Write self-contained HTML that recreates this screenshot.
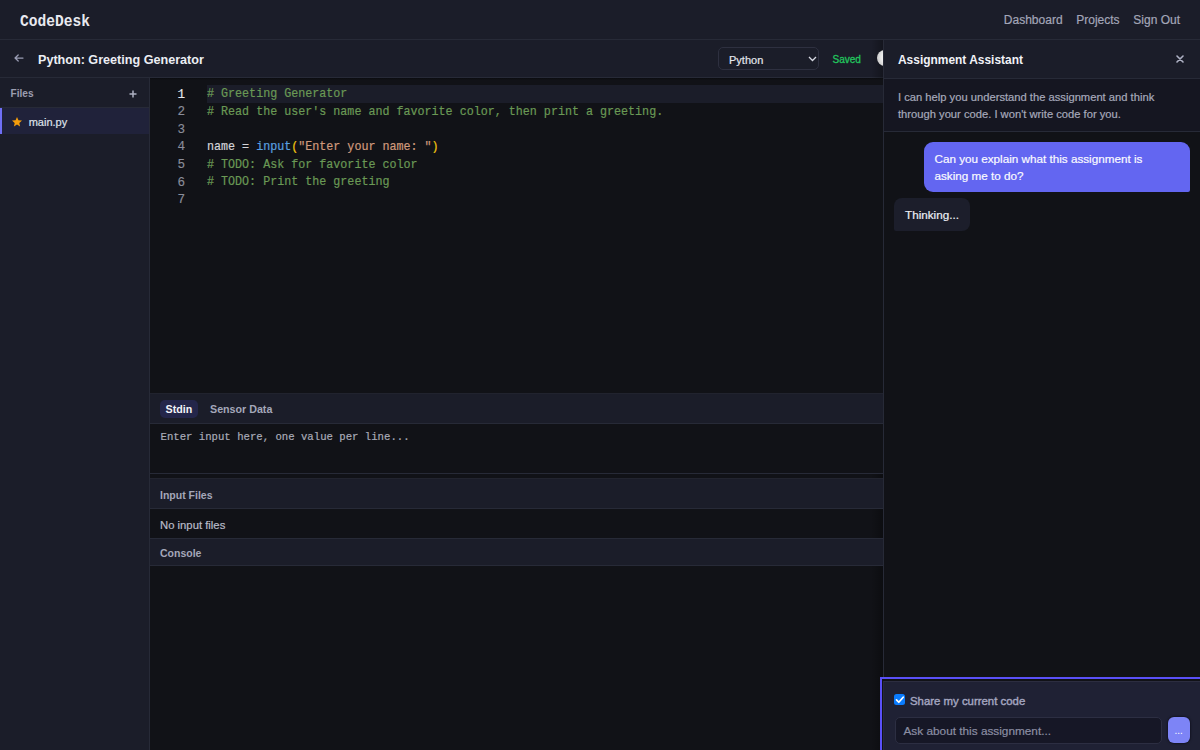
<!DOCTYPE html>
<html><head><meta charset="utf-8">
<style>
*{box-sizing:border-box;margin:0;padding:0}
html,body{width:1200px;height:750px;overflow:hidden;background:#111217;font-family:"Liberation Sans",sans-serif}
.sw{-webkit-text-stroke:0.2px currentColor}
.abs{position:absolute}
#top{left:0;top:0;width:1200px;height:40px;background:#1b1d29;border-bottom:1px solid #272a37}
#logo{left:20px;top:11.5px;font-family:"Liberation Mono",monospace;font-weight:bold;font-size:16px;color:#e8e9f0;line-height:20px;transform:scaleX(0.91);transform-origin:0 0}
#nav{right:20px;top:12px;font-size:12px;color:#a3a6b8;line-height:16px;white-space:nowrap}
#nav span{margin-left:13.7px}
#bar{left:0;top:40px;width:1200px;height:38px;background:#1b1d29;border-bottom:1px solid #272a37}
#back{left:13px;top:50px;color:#9a9db0;font-size:12px}
#title{left:38px;top:52px;font-weight:bold;font-size:12.6px;color:#eceef4;line-height:16px}
#sel{left:718px;top:47px;width:101px;height:23px;border:1px solid #2e3040;border-radius:5px;background:#1b1d29}
#sel span{position:absolute;left:10px;top:5px;font-size:11px;color:#e4e6ee;line-height:14px}
#saved{left:832.5px;top:53px;font-size:10px;color:#22c55e;line-height:14px;-webkit-text-stroke:0.3px #22c55e}
#knob{left:877px;top:50px;width:16px;height:16px;border-radius:50%;background:radial-gradient(circle at 70% 45%,#fafafa 0,#ededed 45%,#c9c9c9 80%,#8a8a8a 100%)}
#side{left:0;top:78px;width:150px;height:672px;background:#1b1d29;border-right:1px solid #272a37}
#fh{left:0;top:78px;width:149px;height:30px;border-bottom:1px solid #272a37}
#fh b{position:absolute;left:10.5px;top:9px;font-size:10.1px;color:#9b9eb0;line-height:13px}
#plus{left:128.5px;top:86.5px;font-size:13px;color:#a6a9bb;line-height:14px}
#row{left:0;top:108px;width:149px;height:26px;background:#20223a;border-left:2px solid #6f6ff5}
#star{left:11px;top:116px;width:12px;height:12px}
#mainpy{left:28.7px;top:116px;font-size:11px;color:#dfe1ea;line-height:13px}
#ed{left:150px;top:78px;width:733px;height:315px;background:#111217}
.ln{position:absolute;left:150px;width:35px;text-align:right;font-family:"Liberation Mono",monospace;font-size:12.6px;color:#8a8d9a;line-height:17.6px;margin-top:1.8px;-webkit-text-stroke:0.15px currentColor}
.cl{position:absolute;left:207px;margin-top:1.5px;font-family:"Liberation Mono",monospace;font-size:12.6px;color:#6a9955;line-height:17.6px;white-space:pre;-webkit-text-stroke:0.2px currentColor;transform:scaleX(0.9286);transform-origin:0 0}
#hl{left:207px;top:85px;width:676px;height:17.6px;background:#1b1d29}
#tabs{left:150px;top:393px;width:733px;height:31px;background:#1b1d29;border-bottom:1px solid #272a37;border-top:1px solid #21232e}
#stdin{left:160px;top:400px;width:38px;height:18px;border-radius:5px;background:#24264a}
#stdin b{position:absolute;left:5.5px;top:2px;font-size:10.7px;color:#f2f3f8;line-height:14px}
#sensor{left:210px;top:402px;font-size:10.7px;font-weight:bold;color:#a4a7b9;line-height:14px}
#stdinbox{left:150px;top:424px;width:733px;height:50px;background:#111217;border-bottom:1px solid #272a37}
#ph{left:160.5px;top:430px;font-family:"Liberation Mono",monospace;font-size:10.65px;color:#a9abb8;-webkit-text-stroke:0.2px #a9abb8;line-height:14px;white-space:pre}
#ifh{left:150px;top:478px;width:733px;height:31px;background:#1b1d29;border-bottom:1px solid #272a37;border-top:1px solid #22242f}
#ifh b,#ch b{position:absolute;left:10px;font-size:10.5px;color:#a4a7b9;line-height:14px}
#ifh b{top:9px}
#noin{left:160px;top:518px;font-size:11.3px;color:#b8bac8;line-height:14px}
#ch{left:150px;top:538px;width:733px;height:28px;background:#1b1d29;border-bottom:1px solid #272a37;border-top:1px solid #272a37}
#ch b{top:7px}
#panel{left:883px;top:40px;width:317px;height:710px;background:#111217;border-left:1px solid #272a37}
#ph1{left:884px;top:40px;width:316px;height:39px;background:#1b1d29;border-bottom:1px solid #272a37}
#ph1 b{position:absolute;left:14px;top:13px;font-size:11.95px;color:#f1f2f7;line-height:14px}
#close{left:1176px;top:52.5px;font-size:12px;color:#c8cad6;line-height:14px;-webkit-text-stroke:0.4px #c8cad6}
#intro{left:884px;top:79px;width:316px;height:53px;background:#151621;border-bottom:1px solid #272a37}
#intro p{position:absolute;left:14px;top:10px;font-size:11.2px;color:#a6a9bb;line-height:16.7px;width:275px}
#ub{left:924px;top:142px;width:266px;height:50px;background:#6366f1;border-radius:9px 9px 2px 9px}
#ub p{position:absolute;left:10.5px;top:9px;font-size:11.7px;color:#fafaff;line-height:16.8px;width:225px}
#tb{left:894px;top:198px;width:76px;height:33px;background:#1c1e2b;border-radius:8px 8px 8px 2px}
#tb p{position:absolute;left:11px;top:10px;font-size:11.7px;color:#eceef4;line-height:14px}
#comp{left:880px;top:677px;width:322px;height:76px;background:#111217;border:2px solid #5a50f8}
#comp2{left:883px;top:681px;width:317px;height:69px;background:#1f2134;border-top:1px solid #2c2d40;border-left:1px solid #272a37}
#cb{left:894px;top:694px;width:11px;height:11px;background:#0a7cff;border-radius:2.5px}
#share{left:910px;top:694px;font-size:11.4px;color:#a4a6c0;line-height:14px;-webkit-text-stroke:0.4px #a4a6c0}
#inp{left:894.5px;top:717px;width:267.5px;height:26.5px;background:#161726;border:1px solid #2c2e42;border-radius:5px}
#inp span{position:absolute;left:8px;top:6px;font-size:11.8px;color:#8b8ea3;line-height:14px}
#send{left:1168px;top:717px;width:22px;height:26px;background:#7d84f6;border-radius:6px;box-shadow:0 0 1.5px 1px rgba(10,10,20,.5)}
#send span{position:absolute;left:6.5px;top:9px;font-size:10px;color:#fff;line-height:10px}
</style></head><body>
<div id="top" class="abs"></div>
<div id="logo" class="abs">CodeDesk</div>
<div id="nav" class="abs sw"><span>Dashboard</span><span>Projects</span><span>Sign Out</span></div>
<div id="bar" class="abs"></div>
<svg class="abs" style="left:13.5px;top:53.5px" width="10" height="8" viewBox="0 0 10 8"><path d="M1 4H9M4.2 1L1 4L4.2 7" fill="none" stroke="#9a9db4" stroke-width="1.25" stroke-linecap="round" stroke-linejoin="round"/></svg>
<div id="title" class="abs">Python: Greeting Generator</div>
<div id="sel" class="abs"><span class="sw">Python</span>
<svg style="position:absolute;left:89px;top:8px" width="9" height="6" viewBox="0 0 9 6"><path d="M1 1L4.5 4.5L8 1" fill="none" stroke="#d8dae4" stroke-width="1.3"/></svg></div>
<div id="saved" class="abs">Saved</div>
<div class="abs" style="left:871px;top:40px;width:12px;height:710px;background:linear-gradient(90deg,rgba(0,0,0,0),rgba(0,0,0,.28))"></div>
<div id="knob" class="abs"></div>

<div id="side" class="abs"></div>
<div id="fh" class="abs"><b>Files</b></div>
<svg class="abs" style="left:128.5px;top:90px" width="8" height="8" viewBox="0 0 8 8"><path d="M4 0.5V7.5M0.5 4H7.5" stroke="#aeb1c2" stroke-width="1.5"/></svg>
<div id="row" class="abs"></div>
<svg id="star" class="abs" viewBox="0 0 24 24"><path d="M12 2l2.9 6.6 7.1.6-5.4 4.7 1.6 7-6.2-3.7-6.2 3.7 1.6-7L2 9.2l7.1-.6z" fill="#f59e0b"/></svg>
<div id="mainpy" class="abs sw">main.py</div>

<div id="ed" class="abs"></div>
<div class="abs" style="left:150px;top:78px;width:733px;height:2px;background:linear-gradient(#0b0c10,#111217)"></div>
<div id="hl" class="abs"></div>
<div class="ln" style="top:84.8px;color:#e6e7ee">1</div>
<div class="ln" style="top:102.4px">2</div>
<div class="ln" style="top:120px">3</div>
<div class="ln" style="top:137.6px">4</div>
<div class="ln" style="top:155.2px">5</div>
<div class="ln" style="top:172.8px">6</div>
<div class="ln" style="top:190.4px">7</div>
<div class="cl" style="top:84.8px"># Greeting Generator</div>
<div class="cl" style="top:102.4px"># Read the user's name and favorite color, then print a greeting.</div>
<div class="cl" style="top:137.6px"><span style="color:#d4d4d8">name = </span><span style="color:#5aa0e0">input</span><span style="color:#f1c40f">(</span><span style="color:#d19a7c">"Enter your name: "</span><span style="color:#f1c40f">)</span></div>
<div class="cl" style="top:155.2px"># TODO: Ask for favorite color</div>
<div class="cl" style="top:172.8px"># TODO: Print the greeting</div>

<div id="tabs" class="abs"></div>
<div id="stdin" class="abs"><b>Stdin</b></div>
<div id="sensor" class="abs">Sensor Data</div>
<div id="stdinbox" class="abs"></div>
<div id="ph" class="abs">Enter input here, one value per line...</div>
<div id="ifh" class="abs"><b>Input Files</b></div>
<div id="noin" class="abs sw">No input files</div>
<div id="ch" class="abs"><b>Console</b></div>

<div id="panel" class="abs"></div>
<div id="ph1" class="abs"><b>Assignment Assistant</b></div>
<svg class="abs" style="left:1176px;top:55px" width="8" height="8" viewBox="0 0 8 8"><path d="M1 1L7 7M7 1L1 7" stroke="#aeb1c4" stroke-width="1.6" stroke-linecap="round"/></svg>
<div id="intro" class="abs"><p class="sw">I can help you understand the assignment and think through your code. I won't write code for you.</p></div>
<div id="ub" class="abs"><p class="sw">Can you explain what this assignment is asking me to do?</p></div>
<div id="tb" class="abs"><p class="sw">Thinking...</p></div>
<div id="comp" class="abs"></div><div id="comp2" class="abs"></div>
<div id="cb" class="abs"><svg width="11.5" height="11.5" viewBox="0 0 12 12" style="position:absolute;left:0;top:0"><path d="M2.6 6.2L5 8.6L9.6 3.4" fill="none" stroke="#fff" stroke-width="1.8" stroke-linecap="round" stroke-linejoin="round"/></svg></div>
<div id="share" class="abs">Share my current code</div>
<div id="inp" class="abs"><span class="sw">Ask about this assignment...</span></div>
<div id="send" class="abs"><span>...</span></div>
</body></html>
